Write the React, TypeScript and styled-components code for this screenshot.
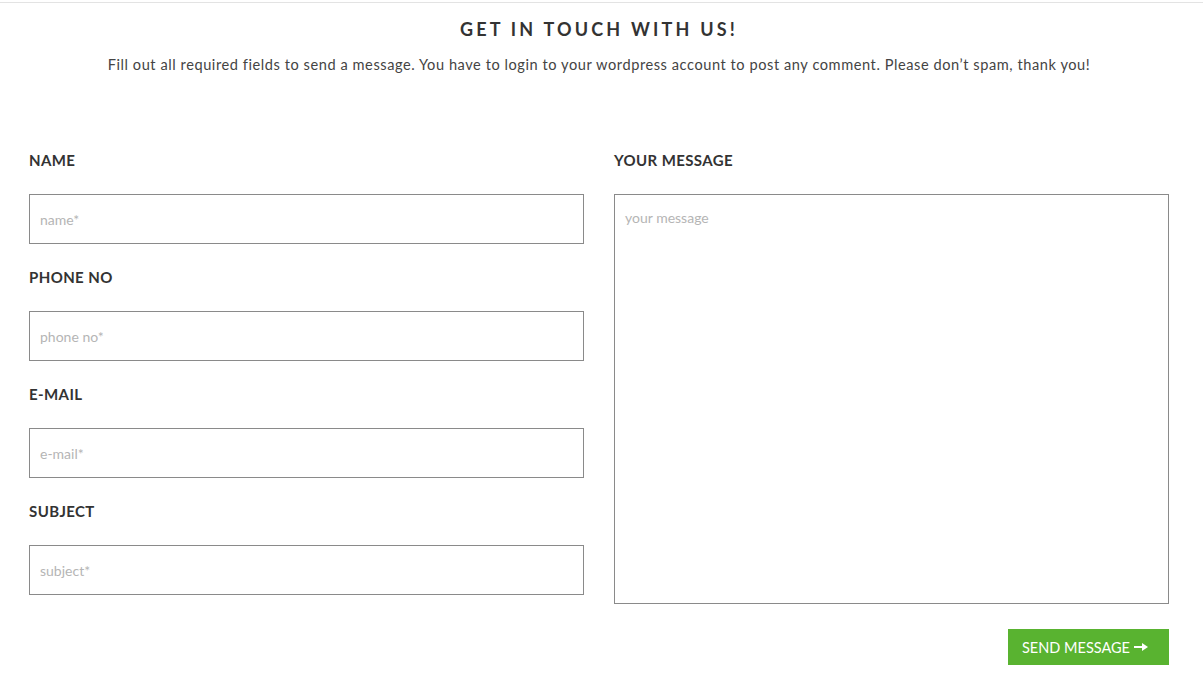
import React from "react";
import styled, { createGlobalStyle } from "styled-components";

const Global = createGlobalStyle`
  html, body { margin: 0; padding: 0; background: #fff; }
  body { font-family: "Lato", "Open Sans", sans-serif; color: #333; }
  * { box-sizing: border-box; }
`;

const Page = styled.div`
  border-top: 1px solid #e3e3e3;
  margin-top: 2px;
  padding: 0 0 30px 29px;
`;

const Container = styled.div`
  width: 1140px;
`;

const Header = styled.header`
  display: flex;
  flex-direction: column;
  align-items: center;
  padding-top: 15px;
`;

const Title = styled.h2`
  margin: 0;
  font-size: 18px;
  line-height: 22px;
  font-weight: 700;
  letter-spacing: 3.2px;
  color: #333;
`;

const Lead = styled.p`
  margin: 14px 0 0;
  font-size: 14.6px;
  line-height: 22px;
  letter-spacing: 0.56px;
  color: #444;
  font-weight: 400;
`;

const Form = styled.form`
  display: grid;
  grid-template-columns: 555px 555px;
  column-gap: 30px;
  margin-top: 74px;
`;

const Column = styled.div`
  display: flex;
  flex-direction: column;
`;

const Field = styled.div`
  display: flex;
  flex-direction: column;
  margin-bottom: 23px;
`;

const Label = styled.label`
  font-size: 15px;
  font-weight: 700;
  line-height: 20px;
  letter-spacing: 0.4px;
  color: #333;
  margin-bottom: 24px;
`;

const Input = styled.input`
  width: 100%;
  height: 50px;
  border: 1px solid #8a8a8a;
  padding: 0 10px;
  font-family: inherit;
  font-size: 14px;
  color: #333;
  outline: none;
  &::placeholder { color: #b5b5b5; }
`;

const TextArea = styled.textarea`
  width: 100%;
  height: 410px;
  border: 1px solid #8a8a8a;
  padding: 14px 10px;
  font-family: inherit;
  font-size: 14px;
  line-height: 18px;
  color: #333;
  resize: none;
  outline: none;
  &::placeholder { color: #b5b5b5; }
`;

const Actions = styled.div`
  display: flex;
  justify-content: flex-end;
  margin-top: 2px;
`;

const Button = styled.button`
  display: inline-flex;
  align-items: center;
  gap: 4px;
  width: 161px;
  height: 36px;
  padding: 0 0 0 14px;
  border: none;
  background: #59b330;
  color: #fff;
  font-family: inherit;
  font-size: 14.5px;
  text-transform: uppercase;
  cursor: pointer;
`;

const Arrow = () => (
  <svg width="14" height="8" viewBox="0 0 14 8">
    <rect x="0" y="3" width="9" height="2" fill="#fff" />
    <path d="M8 0 L14 4 L8 8 Z" fill="#fff" />
  </svg>
);

const fields = [
  { label: "NAME", ph: "name*" },
  { label: "PHONE NO", ph: "phone no*" },
  { label: "E-MAIL", ph: "e-mail*" },
  { label: "SUBJECT", ph: "subject*" },
];

export default function App() {
  return (
    <>
      <Global />
      <Page>
        <Container>
          <Header>
            <Title>GET IN TOUCH WITH US!</Title>
            <Lead>
              Fill out all required fields to send a message. You have to login to your wordpress account to post any comment. Please don’t spam, thank you!
            </Lead>
          </Header>
          <Form onSubmit={(e) => e.preventDefault()}>
            <Column>
              {fields.map((f) => (
                <Field key={f.label}>
                  <Label>{f.label}</Label>
                  <Input placeholder={f.ph} />
                </Field>
              ))}
            </Column>
            <Column>
              <Field>
                <Label>YOUR MESSAGE</Label>
                <TextArea placeholder="your message" />
              </Field>
            </Column>
          </Form>
          <Actions>
            <Button type="submit">
              Send Message <Arrow />
            </Button>
          </Actions>
        </Container>
      </Page>
    </>
  );
}
